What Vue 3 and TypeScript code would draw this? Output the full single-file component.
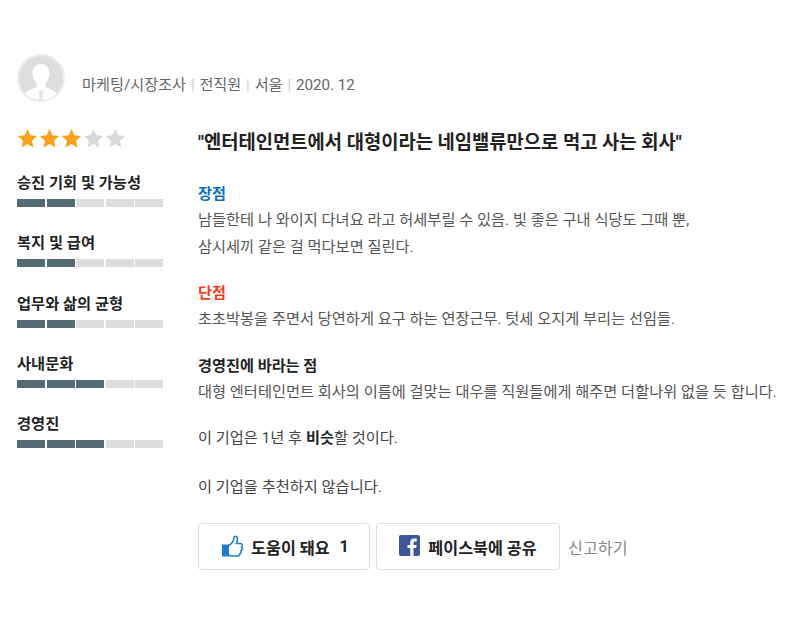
<script setup lang="ts">
const ratings = [
  { label: '승진 기회 및 가능성', score: 2 },
  { label: '복지 및 급여', score: 2 },
  { label: '업무와 삶의 균형', score: 2 },
  { label: '사내문화', score: 3 },
  { label: '경영진', score: 3 },
];
const meta = ['마케팅/시장조사', '전직원', '서울', '2020. 12'];
const starPath = 'M10 1l2.7 6 6.5.7-4.9 4.4 1.4 6.4L10 15.2 4.3 18.5l1.4-6.4L.8 7.7 7.3 7z';
</script>

<template>
  <div class="review">
    <header class="head">
      <svg class="avatar" viewBox="0 0 48 48">
        <circle cx="24" cy="24" r="24" fill="#ececec" />
        <clipPath id="round"><circle cx="24" cy="24" r="22" /></clipPath>
        <circle cx="24" cy="24" r="22" fill="#dedede" />
        <g clip-path="url(#round)" fill="#fff">
          <path d="M24 10c-6 0-8.500 4.500-8.500 9.500 0 4 2 7.500 4 10 .6 1 .5 3-.5 3.800-3 1.700-9 2.700-10.500 6.200L7 48h34l-1.500-8.500c-1.500-3.500-7.500-4.500-10.500-6.200-1-.8-1.100-2.800-.5-3.800 2-2.500 4-6 4-10C32.500 14.500 30 10 24 10z" />
        </g>
        <path d="M22.500 36h3l.5 10h-4z" fill="#e6e6e6" />
      </svg>
      <div class="meta">
        <template v-for="(m, i) in meta" :key="m">
          <span v-if="i" class="sep">|</span>
          <span>{{ m }}</span>
        </template>
      </div>
    </header>

    <div class="body">
      <aside class="side">
        <div class="stars">
          <svg v-for="n in 5" :key="n" class="star" viewBox="0 0 20 20">
            <path :d="starPath" :fill="n <= 3 ? '#f9a11b' : '#d9d9d9'" />
          </svg>
        </div>
        <div v-for="r in ratings" :key="r.label" class="rate">
          <div class="rate-label">{{ r.label }}</div>
          <div class="bar">
            <span v-for="n in 5" :key="n" :class="{ on: n <= r.score }"></span>
          </div>
        </div>
      </aside>

      <main class="main">
        <h2 class="title">"엔터테인먼트에서 대형이라는 네임밸류만으로 먹고 사는 회사"</h2>
        <section class="block">
          <h3 class="good">장점</h3>
          <p>남들한테 나 와이지 다녀요 라고 허세부릴 수 있음. 빛 좋은 구내 식당도 그때 뿐,<br />삼시세끼 같은 걸 먹다보면 질린다.</p>
        </section>
        <section class="block">
          <h3 class="bad">단점</h3>
          <p>초초박봉을 주면서 당연하게 요구 하는 연장근무. 텃세 오지게 부리는 선임들.</p>
        </section>
        <section class="block last">
          <h3>경영진에 바라는 점</h3>
          <p>대형 엔터테인먼트 회사의 이름에 걸맞는 대우를 직원들에게 해주면 더할나위 없을 듯 합니다.</p>
        </section>
        <p class="line">이 기업은 1년 후 <b>비슷</b>할 것이다.</p>
        <p class="line">이 기업을 추천하지 않습니다.</p>
        <div class="actions">
          <button class="btn help">
            <svg class="ico" viewBox="0 0 21 22">
              <rect x="0" y="9.500" width="7" height="12" fill="#1a7fd4" />
              <path d="M7 10.500 C9.500 9 11.500 6 12 2.500 C12.200 .8 15 .6 15.400 3 C15.700 5 15 7 14.500 8.500 L18.500 8.500 C20.500 8.500 20.800 11 19.600 12 C20.600 13.500 20.100 15 19.100 15.500 C19.600 17 18.800 18 17.900 18.500 C18.100 20 17.100 21 15.600 21 L10 21 C8.500 21 7.500 20.500 7 20" fill="#fff" stroke="#1a7fd4" stroke-width="1.600" />
            </svg>
            <span>도움이 돼요</span><span class="count">1</span>
          </button>
          <button class="btn share">
            <svg class="ico fb" viewBox="0 0 21 21">
              <rect width="21" height="21" rx="2" fill="#3b5998" />
              <path d="M14.500 21v-8h2.700l.4-3.100h-3.100V8c0-.9.300-1.500 1.500-1.500h1.700V3.700c-.3 0-1.300-.1-2.400-.1-2.400 0-4.100 1.500-4.100 4.100v2.200H8.500V13h2.700v8z" fill="#fff" />
            </svg>
            <span>페이스북에 공유</span>
          </button>
          <span class="report">신고하기</span>
        </div>
      </main>
    </div>
  </div>
</template>

<style scoped>
.review {
  width: 800px;
  height: 640px;
  box-sizing: border-box;
  padding: 54px 17px 0;
  font-family: Roboto, "Noto Sans CJK KR", sans-serif;
  color: #444;
  background: #fff;
}
.head {
  display: flex;
  align-items: flex-end;
  gap: 17px;
}
.avatar {
  width: 48px;
  height: 48px;
}
.meta {
  font-size: 15.2px;
  line-height: 20px;
  color: #666;
  padding-bottom: 7px;
}
.sep {
  color: #ccc;
  margin: 0 4.800px;
}
.body {
  display: flex;
  margin-top: 26px;
}
.side {
  width: 146px;
  margin-right: 35px;
  flex: none;
}
.stars {
  display: flex;
  height: 22px;
  gap: 1px;
  margin-bottom: 23px;
}
.star {
  width: 21px;
  height: 21px;
}
.rate {
  height: 60.250px;
}
.rate-label {
  font-size: 15.3px;
  line-height: 20px;
  font-weight: 700;
  color: #222;
}
.bar {
  display: flex;
  gap: 1.500px;
  margin-top: 6px;
}
.bar span {
  flex: 1;
  height: 8px;
  background: #ddd;
}
.bar span.on {
  background: #546a75;
}
.main {
  flex: 1;
  padding-top: 2px;
}
.title {
  margin: 0 0 25px;
  font-size: 18.750px;
  line-height: 26px;
  font-weight: 700;
  color: #222;
}
.block {
  margin-bottom: 19px;
}
.block + .block {
  margin-bottom: 20px;
}
.block.last {
  margin-bottom: 19px;
}
h3 {
  margin: 0;
  font-size: 15.2px;
  line-height: 26px;
  font-weight: 700;
  color: #222;
}
h3.good {
  color: #0a6fc8;
}
h3.bad {
  color: #fa3c1e;
}
p {
  margin: 0;
  font-size: 15.250px;
  line-height: 27px;
  color: #555;
}
.line {
  margin-bottom: 22px;
  color: #444;
}
.line b {
  font-weight: 700;
  color: #222;
}
.actions {
  display: flex;
  align-items: center;
  gap: 6px;
}
.btn {
  display: flex;
  align-items: center;
  justify-content: center;
  height: 47px;
  box-sizing: border-box;
  background: #fff;
  border: 1px solid #ddd;
  border-radius: 4px;
  font: 700 16.200px Roboto, "Noto Sans CJK KR", sans-serif;
  color: #222;
  padding: 0;
}
.help {
  width: 172px;
  padding-left: 3px;
}
.share {
  width: 184px;
}
.ico {
  width: 21px;
  height: 22px;
  margin-right: 8px;
  margin-top: -2px;
}
.fb {
  width: 21px;
  height: 21px;
  margin-right: 8px;
}
.count {
  margin-left: 10px;
}
.report {
  font-size: 16.2px;
  color: #888;
  margin-left: 2px;
}
</style>
